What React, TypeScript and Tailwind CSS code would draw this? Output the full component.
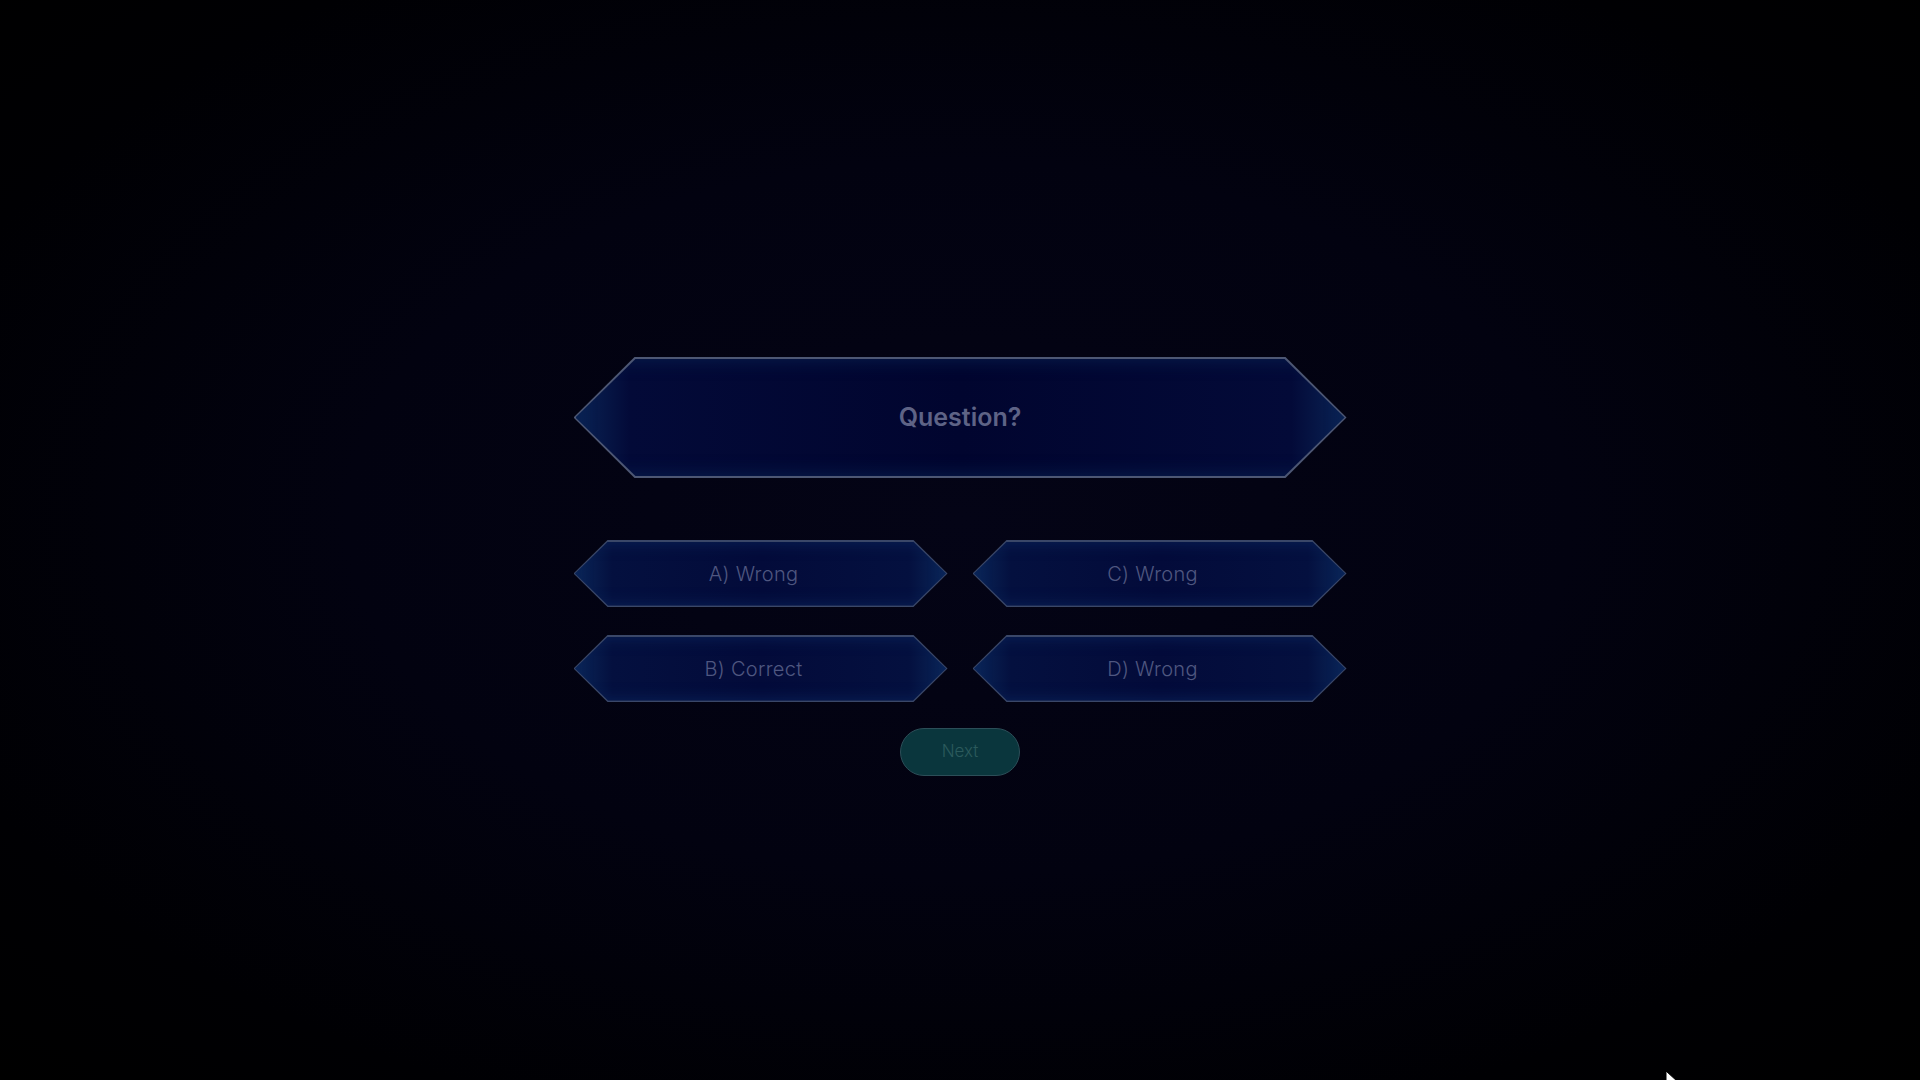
import React from "react"

const hexClip = "[clip-path:polygon(0_50%,_var(--s)_0,_calc(100%-var(--s))_0,_100%_50%,_calc(100%-var(--s))_100%,_var(--s)_100%)]"

const answers = [
  { id: "a", label: "A) Wrong" },
  { id: "c", label: "C) Wrong" },
  { id: "b", label: "B) Correct" },
  { id: "d", label: "D) Wrong" },
]

function AnswerBox({ label }: { label: string }) {
  return (
    <button
      className={`relative h-[67px] w-full bg-[#3a4768] [--s:34px] ${hexClip}`}
    >
      <div
        className={`absolute inset-[1.5px] flex items-center justify-center pr-[14px] bg-[linear-gradient(90deg,#0a2658_0%,#04103f_10%,#030b3a_50%,#04103f_90%,#0a2658_100%)] shadow-[inset_0_0_16px_#0a2358] [--s:33px] ${hexClip}`}
      >
        <span className="text-[20px] font-light tracking-[0.3px] text-[#4f5780] [font-family:Inter,'Noto_Sans',sans-serif]">
          {label}
        </span>
      </div>
    </button>
  )
}

export default function App() {
  return (
    <div className="relative min-h-screen w-full overflow-hidden bg-[radial-gradient(ellipse_at_50%_48%,#040416_0%,#020210_45%,#000003_80%,#000000_100%)]">
      <div className="flex flex-col items-center pt-[357px]">
        {/* Question */}
        <div className={`relative h-[121px] w-[773px] bg-[#4d5774] [--s:61px] ${hexClip}`}>
          <div
            className={`absolute inset-[2px] flex items-center justify-center bg-[linear-gradient(90deg,#0a2455_0%,#030a38_7%,#01052f_50%,#030a38_93%,#0a2455_100%)] shadow-[inset_0_0_18px_#08204f] [--s:60px] ${hexClip}`}
          >
            <span className="text-[25px] font-semibold text-[#5e6386] [font-family:Inter,'Noto_Sans',sans-serif]">
              Question?
            </span>
          </div>
        </div>

        {/* Answers */}
        <div className="mt-[62px] grid w-[773px] grid-cols-2 gap-x-[25px] gap-y-[28px]">
          {answers.map((a) => (
            <AnswerBox key={a.id} label={a.label} />
          ))}
        </div>

        {/* Next */}
        <button className="mt-[26px] h-[48px] w-[120px] rounded-full border border-[#2c4e58] bg-[#0a363d] text-[17px] font-light text-[#2b5a5c] [font-family:Inter,'Noto_Sans',sans-serif]">
          Next
        </button>
      </div>

      {/* mouse cursor */}
      <svg className="absolute left-[1665px] top-[1070px]" width="16" height="20" viewBox="0 0 16 20">
        <path d="M1 1 L1 17 L5 13 L8 19 L10 18 L7 12 L13 12 Z" fill="#ffffff" stroke="#000000" strokeWidth="1" />
      </svg>
    </div>
  )
}
